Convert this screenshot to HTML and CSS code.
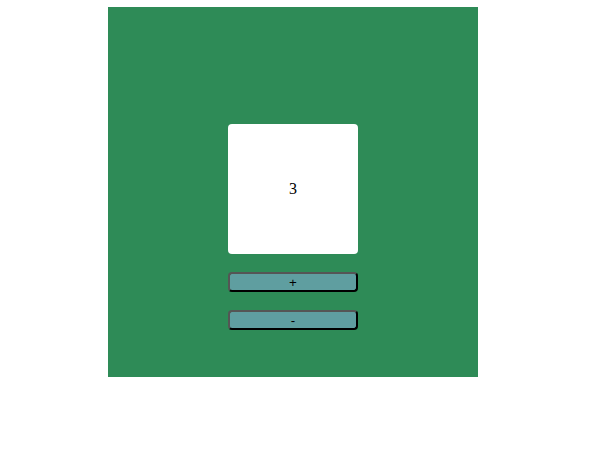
FILE: index.html
```html
<!DOCTYPE html>
<html>
<head>
<meta charset="utf-8">
<link rel="stylesheet" href="styles.css">
</head>
<body>
<div class="box">
  <div class="card">3</div>
  <button class="btn">+</button>
  <button class="btn">-</button>
</div>
</body>
</html>
```
FILE: styles.css
```css
html, body {
  margin: 0;
  padding: 0;
  background: #fff;
}
body {
  padding: 7px 0 0 108px;
}
.box {
  width: 370px;
  height: 370px;
  background: #2e8b57;
  display: flex;
  flex-direction: column;
  align-items: center;
  padding-top: 117px;
  box-sizing: border-box;
  gap: 18px;
}
.card {
  width: 130px;
  height: 130px;
  background: #fff;
  border-radius: 4px;
  display: flex;
  align-items: center;
  justify-content: center;
  font-family: "Liberation Serif", "DejaVu Serif", serif;
  font-size: 16px;
  color: #000;
}
.btn {
  width: 130px;
  height: 20px;
  margin: 0;
  padding: 1px 0 0;
  background: #5f9ea0;
  border: 2px solid;
  border-color: #555 #000 #000 #555;
  border-radius: 4px;
  font-family: "Liberation Sans", sans-serif;
  font-size: 13.33px;
  color: #000;
  line-height: 14px;
}
```
